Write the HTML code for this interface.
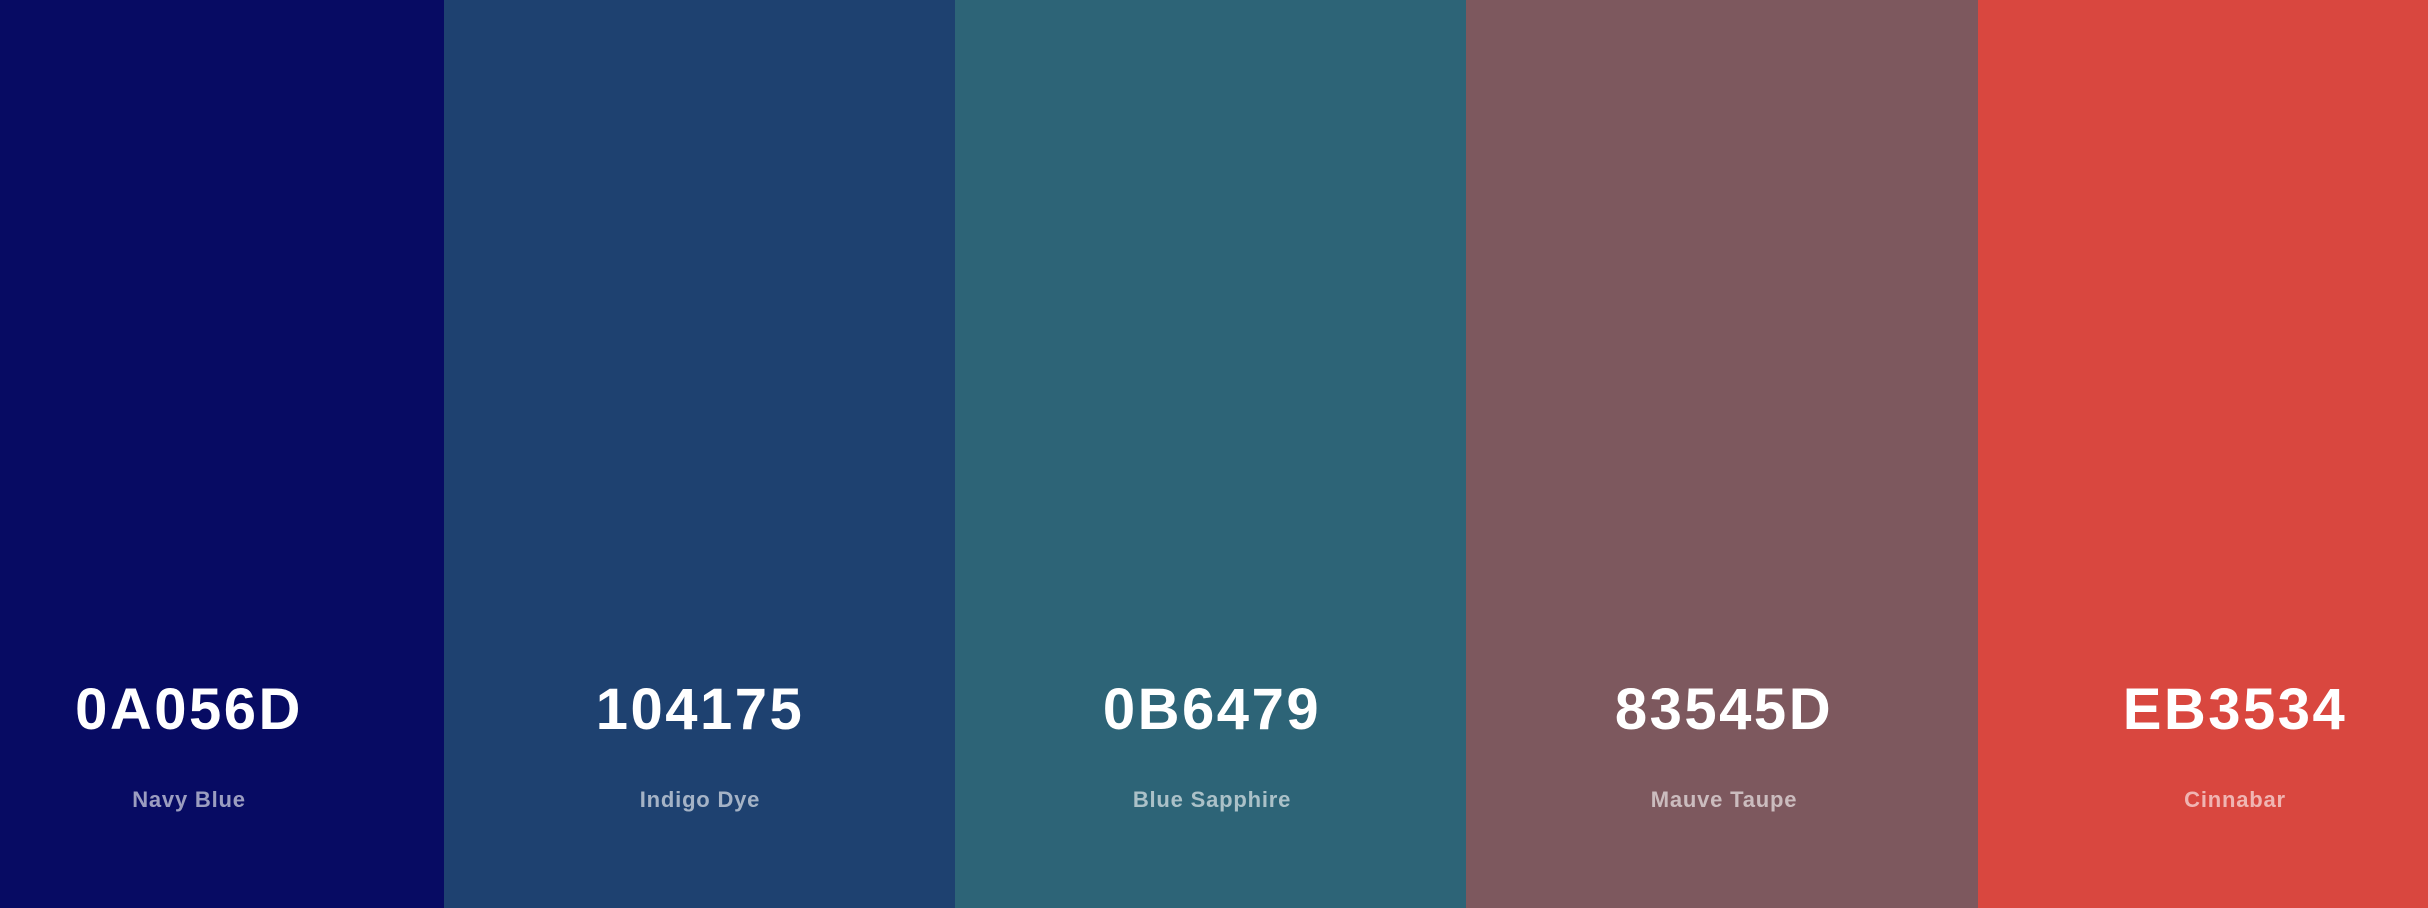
<!DOCTYPE html>
<html><head><meta charset="utf-8"><style>
html,body{margin:0;padding:0;width:2428px;height:908px;overflow:hidden;position:relative;font-family:"Liberation Sans",sans-serif}
.b{position:absolute;top:0;height:908px}
.c{position:absolute;top:0;width:512px;height:908px;text-align:center}
.h{position:absolute;left:0;right:0;top:672px;font-size:58px;font-weight:bold;color:#fff;letter-spacing:2.5px;line-height:76px}
.l{position:absolute;left:0;right:0;top:786px;font-size:22px;font-weight:bold;color:rgba(255,255,255,0.6);line-height:28px;letter-spacing:0.8px}
</style></head><body>
<div class="b" style="left:0;width:444px;background:#070b63"></div>
<div class="b" style="left:444px;width:511px;background:#1e4170"></div>
<div class="b" style="left:955px;width:511px;background:#2d6477"></div>
<div class="b" style="left:1466px;width:512px;background:#7d585e"></div>
<div class="b" style="left:1978px;width:450px;background:#d9473f"></div>
<div class="c" style="left:-67px"><div class="h">0A056D</div><div class="l">Navy Blue</div></div>
<div class="c" style="left:444px"><div class="h">104175</div><div class="l">Indigo Dye</div></div>
<div class="c" style="left:956px"><div class="h">0B6479</div><div class="l">Blue Sapphire</div></div>
<div class="c" style="left:1468px"><div class="h">83545D</div><div class="l">Mauve Taupe</div></div>
<div class="c" style="left:1979px"><div class="h">EB3534</div><div class="l">Cinnabar</div></div>
</body></html>
